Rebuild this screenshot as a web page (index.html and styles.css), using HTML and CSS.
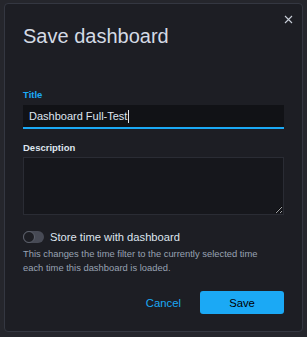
FILE: index.html
```html
<!DOCTYPE html>
<html>
<head>
<meta charset="utf-8">
<title>Save dashboard</title>
<link rel="stylesheet" href="styles.css">
</head>
<body>
<div class="modal">
  <button class="modal-close" aria-label="Close">
    <svg width="9" height="9" viewBox="0 0 9 9"><path d="M1 1L8 8M8 1L1 8" stroke="#c8ced8" stroke-width="1.1" fill="none"/></svg>
  </button>
  <h1 class="modal-title">Save dashboard</h1>

  <div class="form">
    <label class="field-label field-label-active">Title</label>
    <div class="field-input">Dashboard Full-Test<span class="caret"></span></div>

    <label class="field-label field-label-gap">Description</label>
    <textarea class="field-textarea"></textarea>

    <div class="switch-row">
      <span class="switch"><span class="switch-knob"></span></span>
      <span class="switch-label">Store time with dashboard</span>
    </div>
    <p class="help-text">This changes the time filter to the currently selected time each time this dashboard is loaded.</p>
  </div>

  <div class="modal-footer">
    <button class="btn-empty">Cancel</button>
    <button class="btn-fill">Save</button>
  </div>
</div>
</body>
</html>
```

FILE: styles.css
```css
/* Save dashboard modal, dark theme */

html, body
{ margin: 0;
height: 100%;
}

body
{ background-color: #25262c;
padding: 3px 4px 5px 4px;
box-sizing: border-box;
font-family: "Liberation Sans", Arial, sans-serif;
color: #dfe5ef;
color-scheme: dark;
}

div.modal
{ position: relative;
width: 299px;
height: 329px;
box-sizing: border-box;
background-color: #1d1e24;
border: 1px solid #343741;
border-radius: 4px;
padding: 18px 18px 17px 18px;
display: flex;
flex-direction: column;
}

button.modal-close
{ position: absolute;
top: 6px;
right: 5px;
width: 18px;
height: 18px;
padding: 0;
border: none;
background: none;
display: flex;
align-items: center;
justify-content: center;
}

h1.modal-title
{ margin: 0;
font-size: 20px;
line-height: 28px;
font-weight: 400;
color: #d4dae4;
}

div.form
{ margin-top: 38px;
display: flex;
flex-direction: column;
}

label.field-label
{ font-size: 9.5px;
line-height: 14px;
font-weight: 700;
color: #dfe5ef;
margin-bottom: 3px;
}

label.field-label-active
{ color: #1ba9f5;
}

label.field-label-gap
{ margin-top: 12px;
margin-bottom: 2px;
}

div.field-input
{ height: 24px;
box-sizing: border-box;
background-color: #111216;
border-bottom: 2px solid #1ba9f5;
padding: 0 6px;
font-size: 11px;
line-height: 23px;
color: #dfe5ef;
display: flex;
align-items: center;
}

span.caret
{ display: inline-block;
width: 1px;
height: 13px;
background-color: #dfe5ef;
margin-left: 1px;
}

textarea.field-textarea
{ height: 58px;
box-sizing: border-box;
margin: 0;
background-color: #16171c;
border: 1px solid #2a2c34;
border-radius: 0;
color: #dfe5ef;
font-family: inherit;
}

div.switch-row
{ margin-top: 14px;
display: flex;
align-items: center;
height: 16px;
}

span.switch
{ width: 21px;
height: 12px;
border-radius: 6px;
background-color: #474a55;
position: relative;
}

span.switch-knob
{ position: absolute;
left: 0;
top: 0;
width: 12px;
height: 12px;
box-sizing: border-box;
border-radius: 50%;
background-color: #1d1e24;
border: 1px solid #5d616c;
}

span.switch-label
{ margin-left: 6px;
font-size: 11.2px;
font-weight: 400;
color: #dfe5ef;
}

p.help-text
{ margin: 2px 0 0 0;
max-width: 252px;
font-size: 9.4px;
line-height: 13.5px;
color: #98a2b3;
}

div.modal-footer
{ margin-top: auto;
display: flex;
justify-content: flex-end;
align-items: center;
}

button.btn-empty
{ border: none;
background: none;
font-family: inherit;
font-size: 11.3px;
color: #1ba9f5;
padding: 0;
margin-right: 19px;
}

button.btn-fill
{ width: 84px;
height: 23px;
border: none;
border-radius: 3px;
background-color: #1ba9f5;
color: #000;
font-family: inherit;
font-size: 11.3px;
}
```
